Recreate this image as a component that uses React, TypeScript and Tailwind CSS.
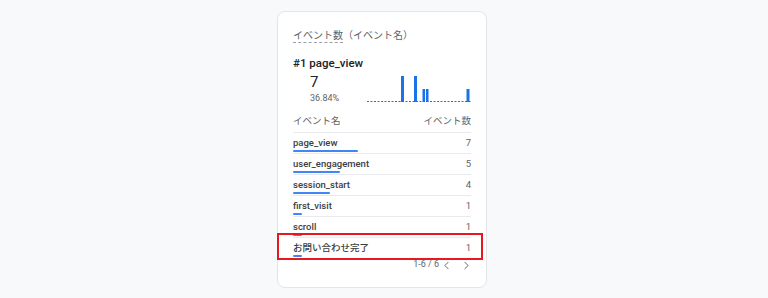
import React from 'react';
import { ChevronLeft, ChevronRight } from 'lucide-react';

interface Row {
    name: string;
    count: number;
    bar: number;
}

const rows: Row[] = [
    { name: 'page_view', count: 7, bar: 65 },
    { name: 'user_engagement', count: 5, bar: 47 },
    { name: 'session_start', count: 4, bar: 37 },
    { name: 'first_visit', count: 1, bar: 9 },
    { name: 'scroll', count: 1, bar: 9 },
    { name: 'お問い合わせ完了', count: 1, bar: 9 },
];

function Sparkline() {
    return (
        <svg width="104" height="28" viewBox="0 0 104 28" className="block">
            <line x1="0" y1="26.5" x2="104" y2="26.5" stroke="#1a73e8" strokeWidth="1" strokeDasharray="2 1.5" />
            <rect x="34" y="1" width="3" height="26" fill="#1a73e8" />
            <rect x="47" y="1" width="3" height="26" fill="#1a73e8" />
            <rect x="55.5" y="14" width="2.5" height="13" fill="#1a73e8" />
            <rect x="59" y="14" width="2.5" height="13" fill="#1a73e8" />
            <rect x="99.5" y="14" width="3" height="13" fill="#1a73e8" />
        </svg>
    );
}

export default function App() {
    return (
        <div
            className="w-[768px] h-[298px] bg-[#f8f9fa] pl-[277px] pt-[11px] overflow-hidden"
            style={{ fontFamily: 'Roboto, "Noto Sans CJK JP", sans-serif' }}
        >
            <div className="relative w-[210px] h-[277px] bg-white border border-[#e3e5e8] rounded-lg px-[15px] pt-[16px]">
                {/* card title */}
                <div className="h-[18px] text-[10px] leading-[16px] text-[#5f6368]">
                    <span className="border-b border-dashed border-[#9aa0a6] pb-[1px]">イベント数</span>
                    <span>（イベント名）</span>
                </div>

                {/* top item */}
                <div className="mt-[9px] text-[11.5px] leading-[16px] font-medium text-[#202124]">#1 page_view</div>
                <div className="flex mt-[1px]">
                    <div className="w-[74px] pl-[17px]">
                        <div className="text-[15px] leading-[20px] text-[#202124]">7</div>
                        <div className="text-[9px] leading-[12px] text-[#5f6368]">36.84%</div>
                    </div>
                    <div className="pt-[3px]">
                        <Sparkline />
                    </div>
                </div>

                {/* table header */}
                <div className="flex justify-between items-center h-[28px] pt-[7px] text-[9.5px] text-[#5f6368]">
                    <span>イベント名</span>
                    <span>イベント数</span>
                </div>

                {/* rows */}
                {rows.map((r) => (
                    <div key={r.name} className="border-t border-[#e8eaed] pt-[3px] h-[21px]">
                        <div className="flex justify-between text-[9.5px] leading-[14px]">
                            <span className="font-medium text-[#3c4043]">{r.name}</span>
                            <span className="text-[#5f6368]">{r.count}</span>
                        </div>
                        <div className="h-[2px] bg-[#4285f4] rounded-full" style={{ width: r.bar }} />
                    </div>
                ))}

                {/* pagination */}
                <div className="flex justify-end items-center h-[14px] mr-[-2px] text-[9px] text-[#5f6368]">
                    <span>1-6 / 6</span>
                    <ChevronLeft className="w-[13px] h-[13px] ml-[1px] text-[#5f6368]" strokeWidth={1.8} />
                    <ChevronRight className="w-[13px] h-[13px] ml-[7px] text-[#5f6368]" strokeWidth={1.8} />
                </div>

                {/* highlight box */}
                <div className="absolute left-[-1px] top-[221px] w-[206px] h-[27px] border-2 border-[#e5191f]" />
            </div>
        </div>
    );
}
